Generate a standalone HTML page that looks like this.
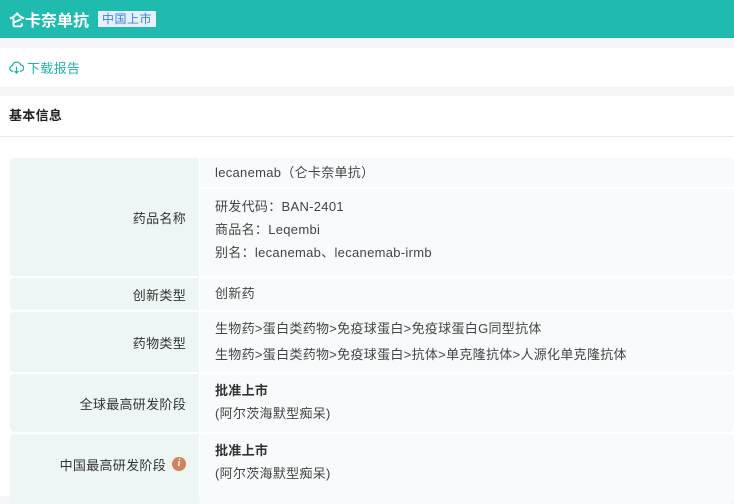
<!DOCTYPE html>
<html><head><meta charset="utf-8"><style>
*{margin:0;padding:0;box-sizing:border-box}
body{width:734px;height:486px;overflow:hidden;background:#f5f6f8;font-family:"Liberation Sans","Noto Sans CJK SC",sans-serif;color:#333;font-size:13px;letter-spacing:.3px}
.hd{height:38px;background:#20bbaf;display:flex;align-items:center;padding-left:9px}
.hd h1{color:#fff;font-size:16px;font-weight:bold;letter-spacing:0}
.tag{margin-left:9px;background:#e6f0ff;color:#3c82e6;font-size:12px;padding:0 4px;height:16px;line-height:16px;border-radius:1px;letter-spacing:.5px}
.dl{position:absolute;top:48px;left:0;width:734px;height:38px;background:#fff;display:flex;align-items:center;padding-left:9px;color:#20b3a8;font-size:13px}
.dl svg{margin-right:3px}
.main{position:absolute;top:96px;left:0;width:734px;height:400px;background:#fff}
.sec{height:41px;border-bottom:1px solid #e8e8e8;padding-left:9px;line-height:40px;font-weight:bold;font-size:13px;color:#222}
.row{position:absolute;left:10px;width:724px;display:flex;border-radius:4px;overflow:hidden}
.lab{width:189px;background:#eef6f5;display:flex;align-items:center;justify-content:flex-end;padding-right:13px;color:#333}
.val{flex:1;background:#f8fbfb;margin-left:1px}
.v{padding-left:15px;color:#444}
.i{display:inline-block;width:14px;height:14px;border-radius:50%;background:#d0845a;color:#fff;font-size:10px;font-style:italic;font-weight:bold;text-align:center;line-height:14px;margin-left:6px;font-family:"Liberation Serif",serif;letter-spacing:0}
</style></head><body>
<div class="hd"><h1>仑卡奈单抗</h1><span class="tag">中国上市</span></div>
<div class="dl"><svg width="15" height="13" viewBox="0 0 16 14" fill="none" stroke="#20b3a8" stroke-width="1.4"><path d="M4.5 11H4a3 3 0 0 1-.3-6A4.5 4.5 0 0 1 12.3 4 3.5 3.5 0 0 1 12 11h-.5"/><path d="M8 6v7M5.8 10.8 8 13l2.2-2.2"/></svg>下载报告</div>
<div class="main"><div class="sec">基本信息</div></div>

<div class="row" style="top:158px;height:118px">
<div class="lab">药品名称</div>
<div class="val" style="background:transparent;display:flex;flex-direction:column">
<div class="v" style="height:29px;line-height:29px;background:#f8fbfb">lecanemab（仑卡奈单抗）</div>
<div class="v" style="flex:1;margin-top:2px;background:#f8fbfb;padding-top:6px;line-height:23px">研发代码：BAN-2401<br>商品名：Leqembi<br>别名：lecanemab、lecanemab-irmb</div>
</div></div>

<div class="row" style="top:278px;height:32px"><div class="lab">创新类型</div><div class="val v" style="line-height:32px">创新药</div></div>

<div class="row" style="top:312px;height:60px"><div class="lab">药物类型</div><div class="val v" style="padding-top:4px;line-height:26px">生物药&gt;蛋白类药物&gt;免疫球蛋白&gt;免疫球蛋白G同型抗体<br>生物药&gt;蛋白类药物&gt;免疫球蛋白&gt;抗体&gt;单克隆抗体&gt;人源化单克隆抗体</div></div>

<div class="row" style="top:374px;height:58px"><div class="lab">全球最高研发阶段</div><div class="val v" style="padding-top:5px;line-height:23px"><b style="color:#333">批准上市</b><br>(阿尔茨海默型痴呆)</div></div>

<div class="row" style="top:434px;height:70px"><div class="lab" style="padding-bottom:10px">中国最高研发阶段<span class="i">i</span></div><div class="val v" style="padding-top:5px;line-height:23px"><b style="color:#333">批准上市</b><br>(阿尔茨海默型痴呆)</div></div>
</body></html>
